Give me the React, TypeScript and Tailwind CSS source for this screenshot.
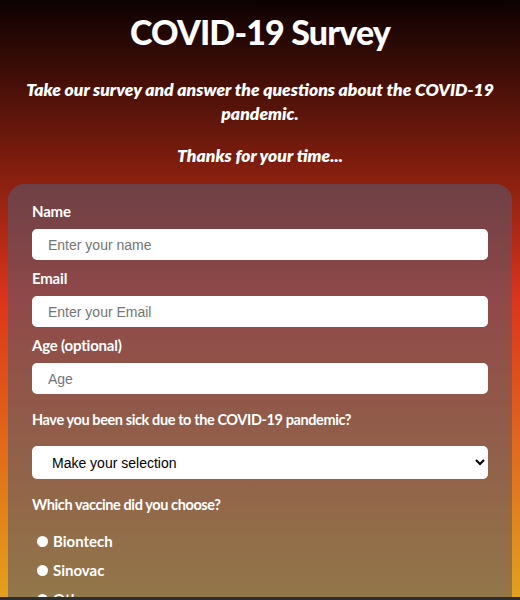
import React from "react";

const labelFont = { fontFamily: "Lato, 'Noto Sans', sans-serif" };

export default function App() {
  return (
    <div
      className="min-h-screen bg-fixed bg-[linear-gradient(to_bottom,#0c0101_0%,#de3419_50%,#e4a21a_100%)] px-2 pb-10 text-white"
      style={labelFont}
    >
      <header className="flex flex-col items-center pt-[10px] text-center">
        <h1 className="text-[34px] font-black leading-[44px] tracking-tight">COVID-19 Survey</h1>
        <p className="mt-[24px] px-2 text-[17.5px] font-extrabold italic leading-6">
          Take our survey and answer the questions about the COVID-19 pandemic.
        </p>
        <p className="mt-[18px] text-[17.5px] font-extrabold italic leading-6">Thanks for your time...</p>
      </header>

      <form className="mt-[16px] flex flex-col rounded-[16px] bg-[rgba(88,88,108,0.58)] px-6 pt-[17px] pb-8">
        <div className="flex flex-col">
          <label className="mb-2 text-[15px] font-bold leading-5 tracking-[-0.2px]">Name</label>
          <input
            className="h-[31px] rounded-[5px] bg-white pl-4 text-[14px] text-black outline-none placeholder:text-[#757575]"
            style={{ fontFamily: "'Liberation Sans', Arial, sans-serif" }}
            placeholder="Enter your name"
          />
        </div>
        <div className="mt-2 flex flex-col">
          <label className="mb-2 text-[15px] font-bold leading-5 tracking-[-0.2px]">Email</label>
          <input
            className="h-[31px] rounded-[5px] bg-white pl-4 text-[14px] text-black outline-none placeholder:text-[#757575]"
            style={{ fontFamily: "'Liberation Sans', Arial, sans-serif" }}
            placeholder="Enter your Email"
          />
        </div>
        <div className="mt-2 flex flex-col">
          <label className="mb-2 text-[15px] font-bold leading-5 tracking-[-0.2px]">Age (optional)</label>
          <input
            className="h-[31px] rounded-[5px] bg-white pl-4 text-[14px] text-black outline-none placeholder:text-[#757575]"
            style={{ fontFamily: "'Liberation Sans', Arial, sans-serif" }}
            placeholder="Age"
          />
        </div>

        <div className="mt-4 flex flex-col">
          <label className="mb-4 text-[14.5px] font-bold leading-5 tracking-[-0.4px]">
            Have you been sick due to the COVID-19 pandemic?
          </label>
          <select
            className="h-[33px] rounded-[5px] bg-white pl-4 text-[14px] text-black outline-none"
            style={{ fontFamily: "'Liberation Sans', Arial, sans-serif" }}
            defaultValue=""
          >
            <option value="">Make your selection</option>
            <option value="yes">Yes</option>
            <option value="no">No</option>
          </select>
        </div>

        <div className="mt-4 flex flex-col">
          <p className="mb-4 text-[14.5px] font-bold leading-5 tracking-[-0.4px]">Which vaccine did you choose?</p>
          <div className="flex flex-col gap-[9px] pl-[5px]">
            {["Biontech", "Sinovac", "Other"].map((v) => (
              <label key={v} className="flex h-5 items-center gap-[5px] text-[15px] font-bold leading-5">
                <input
                  type="radio"
                  name="vaccine"
                  className="h-[11px] w-[11px] appearance-none rounded-full bg-white"
                />
                {v}
              </label>
            ))}
          </div>
        </div>
      </form>

      <div className="fixed bottom-0 left-0 h-[3px] w-full bg-[#2c2d2e]" />
    </div>
  );
}
